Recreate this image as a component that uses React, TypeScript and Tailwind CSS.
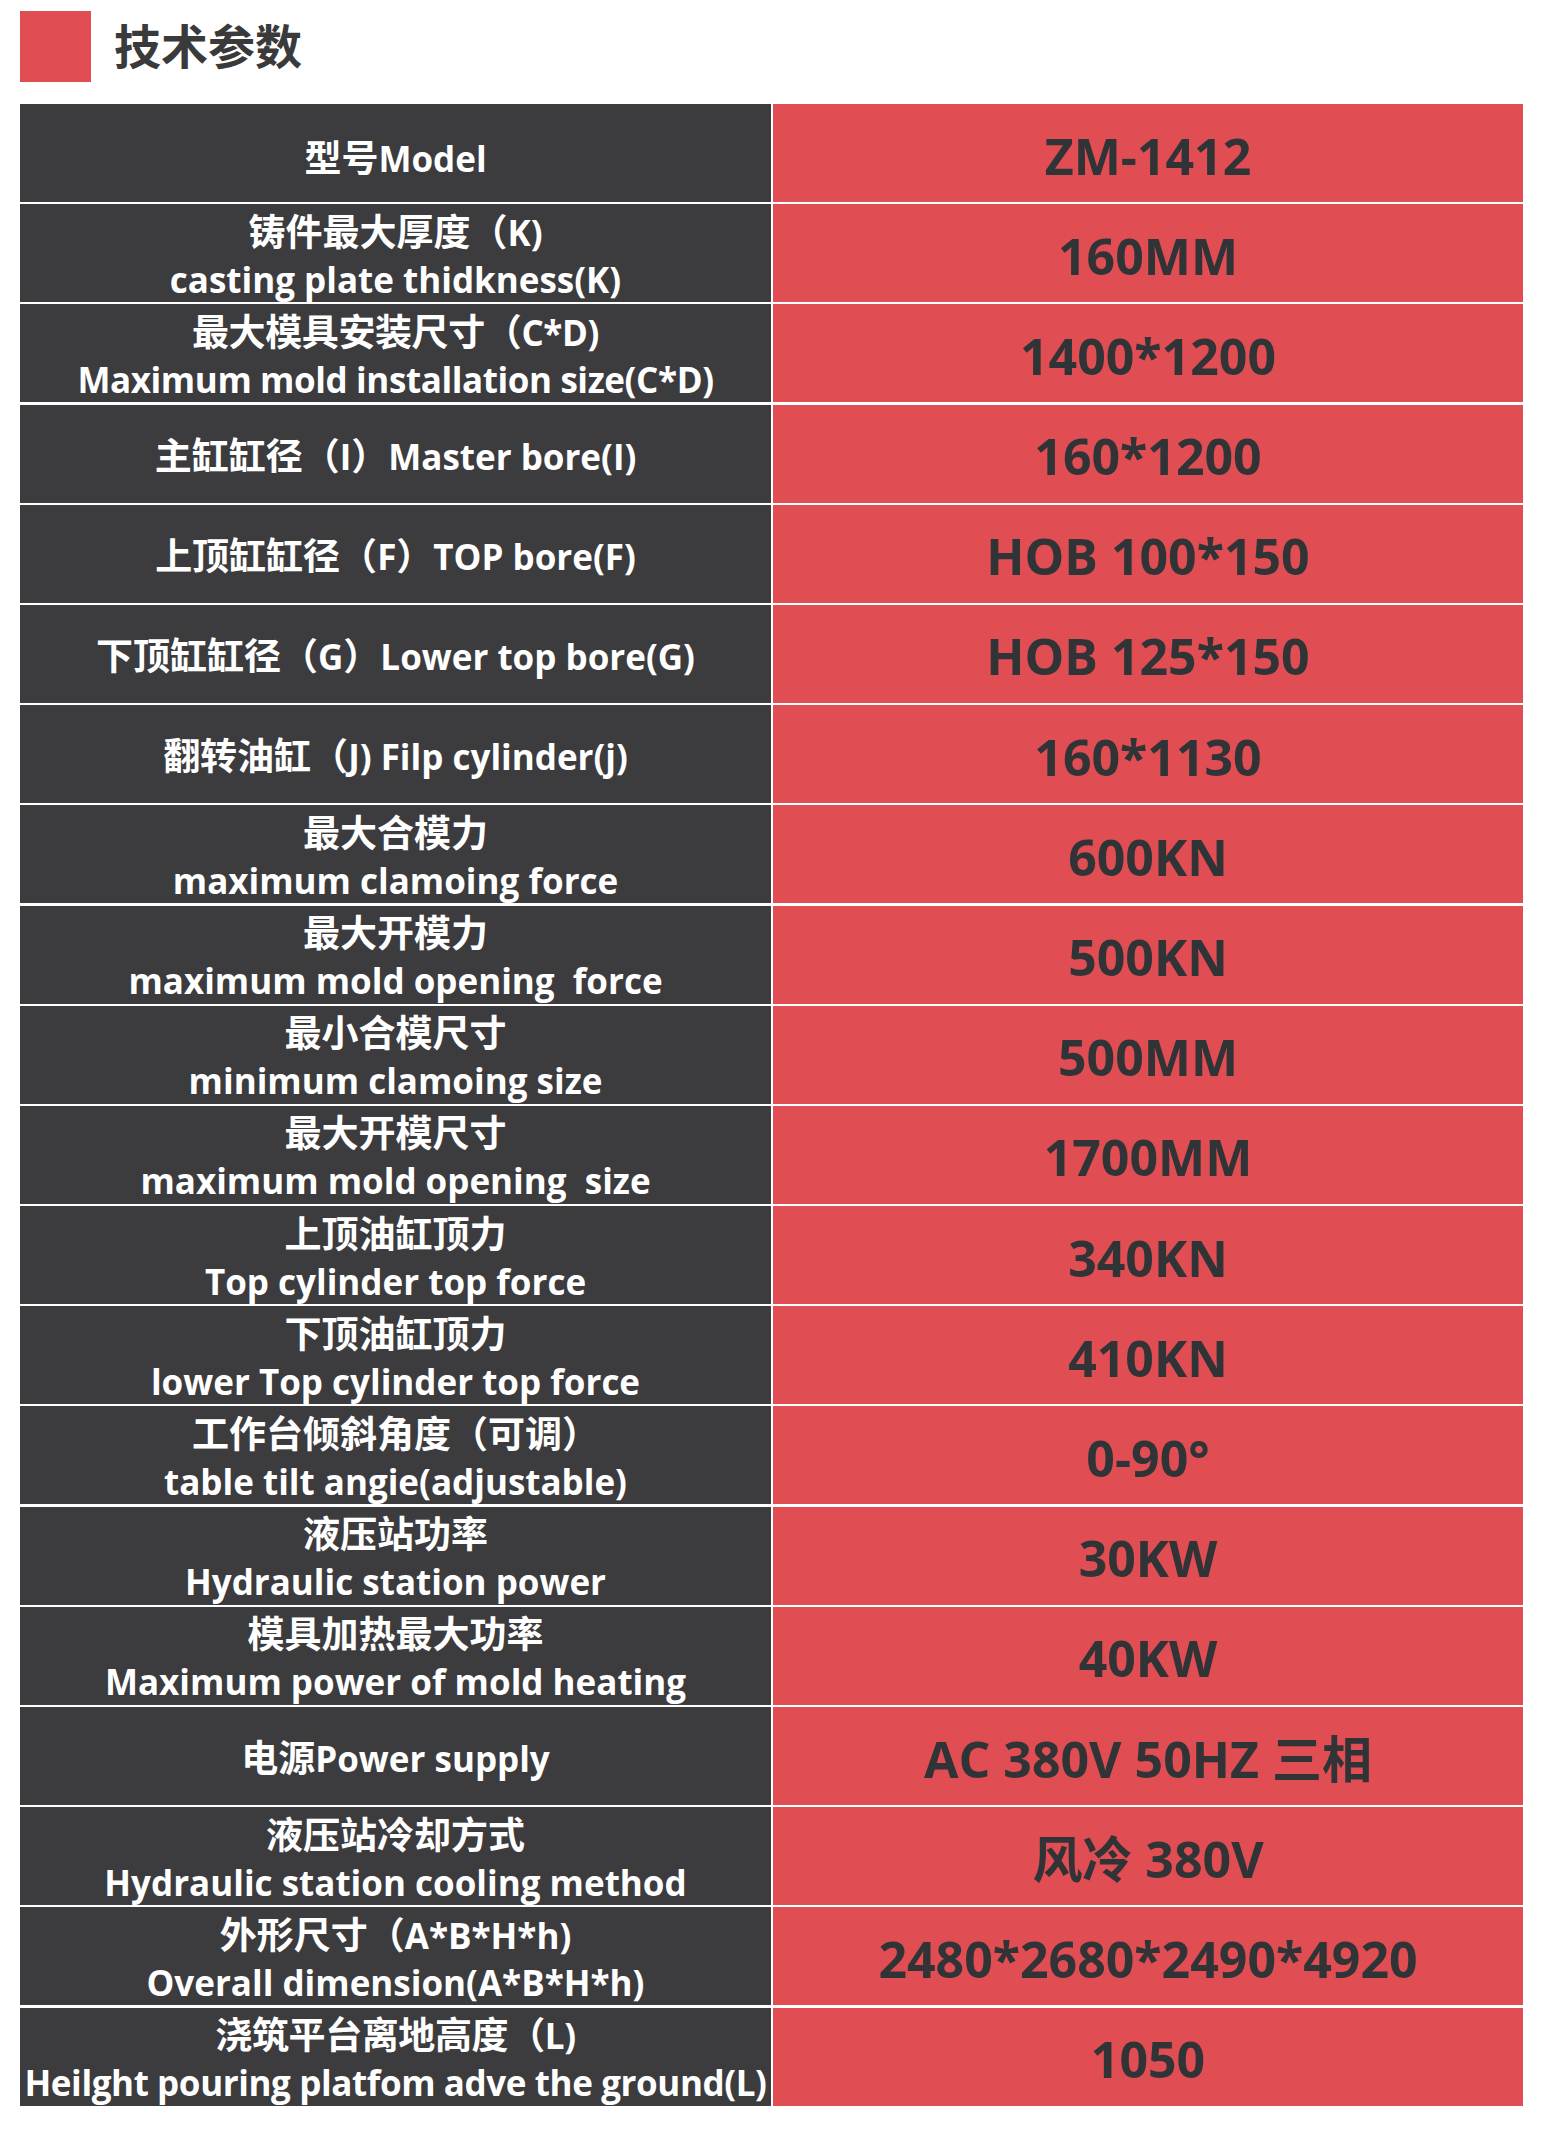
const specs: { label: string[]; value: string; tight?: boolean }[] = [
  { label: ['型号Model'], value: 'ZM-1412' },
  { label: ['铸件最大厚度（K)', 'casting plate thidkness(K)'], value: '160MM' },
  { label: ['最大模具安装尺寸（C*D)', 'Maximum mold installation size(C*D)'], value: '1400*1200', tight: true },
  { label: ['主缸缸径（I）Master bore(I)'], value: '160*1200' },
  { label: ['上顶缸缸径（F）TOP bore(F)'], value: 'HOB 100*150' },
  { label: ['下顶缸缸径（G）Lower top bore(G)'], value: 'HOB 125*150' },
  { label: ['翻转油缸（J) Filp cylinder(j)'], value: '160*1130' },
  { label: ['最大合模力', 'maximum clamoing force'], value: '600KN' },
  { label: ['最大开模力', 'maximum mold opening  force'], value: '500KN' },
  { label: ['最小合模尺寸', 'minimum clamoing size'], value: '500MM' },
  { label: ['最大开模尺寸', 'maximum mold opening  size'], value: '1700MM' },
  { label: ['上顶油缸顶力', 'Top cylinder top force'], value: '340KN' },
  { label: ['下顶油缸顶力', 'lower Top cylinder top force'], value: '410KN' },
  { label: ['工作台倾斜角度（可调）', 'table tilt angie(adjustable)'], value: '0-90°' },
  { label: ['液压站功率', 'Hydraulic station power'], value: '30KW' },
  { label: ['模具加热最大功率', 'Maximum power of mold heating'], value: '40KW' },
  { label: ['电源Power supply'], value: 'AC 380V 50HZ 三相' },
  { label: ['液压站冷却方式', 'Hydraulic station cooling method'], value: '风冷 380V' },
  { label: ['外形尺寸（A*B*H*h)', 'Overall dimension(A*B*H*h)'], value: '2480*2680*2490*4920' },
  { label: ['浇筑平台离地高度（L)', 'Heilght pouring platfom adve the ground(L)'], value: '1050', tight: true },
]

// chinese glyphs sit a little bigger than the latin ones in the original
const Mixed = ({ text }: { text: string }) => {
  const parts = text.split(/([\u3000-\u9fff\uff00-\uffef]+)/).filter(Boolean)
  return (
    <>
      {parts.map((p, i) =>
        /[\u3000-\u9fff\uff00-\uffef]/.test(p) ? (
          <span key={i} className="text-[37px]">{p}</span>
        ) : (
          <span key={i}>{p}</span>
        )
      )}
    </>
  )
}

const App = () => {
  return (
    <div className="w-[1542px] min-h-[2131px] bg-white font-['Open_Sans','Noto_Sans_CJK_SC',sans-serif]">
      {/* section title */}
      <div className="flex items-center gap-[23px] pl-[20px] pt-[11px]">
        <div className="h-[71px] w-[71px] bg-[#e04d52]" />
        <h1 className="text-[47px] font-bold leading-none text-[#3a3a3a]">技术参数</h1>
      </div>

      {/* spec table */}
      <div className="ml-[20px] mt-[22px] grid w-[1503px] grid-cols-[751px_750px] gap-x-[2px] gap-y-[2.2px]">
        {specs.map((row, idx) => (
          <div key={row.value} className="contents">
            <div
              className={`flex h-[98px] flex-col items-center justify-center bg-[#3c3b3d] text-center text-[35px] font-bold leading-[47px] text-white ${
                idx === 0 ? 'pt-[10px]' : 'pt-[4px]'
              } ${row.tight ? 'tracking-[-0.4px]' : ''}`}
            >
              {row.label.map((line) => (
                <span key={line} className="whitespace-pre">
                  <Mixed text={line} />
                </span>
              ))}
            </div>
            <div className="flex h-[98px] items-center justify-center bg-[#e04d52] pt-[5px] text-[50px] font-bold leading-none text-[#303436]">
              {row.value}
            </div>
          </div>
        ))}
      </div>
    </div>
  )
}

export default App
